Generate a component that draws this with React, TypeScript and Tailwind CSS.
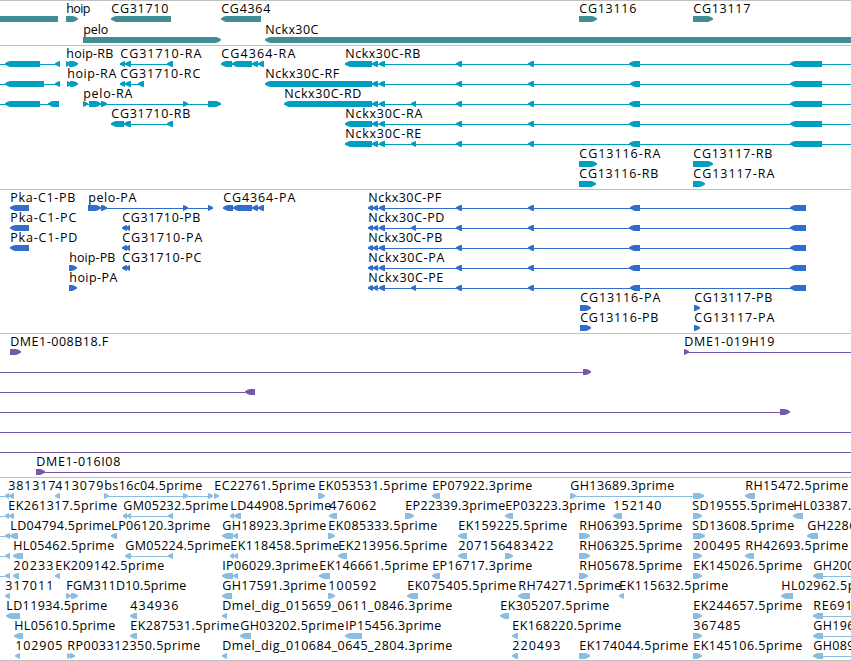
import React from "react";

// [start, end, text]
type Label = [number, number, string];
// [start, end]
type Span = [number, number];

interface Row {
  labels?: Label[];
  lines?: Span[];
  left?: Span[];
  right?: Span[];
  plain?: Span[];
}

interface Track {
  name: string;
  className: string;
  rowClass: string;
  rows: Row[];
}

const NCKX_EXONS: Span[] = [[372, 378], [379, 385], [456, 462], [528, 534]];
const NCKX_CDS: Span[] = [[368, 373], [373, 378], [379, 385], [456, 462], [528, 534], [790, 806]];

const tracks: Track[] = [
  {
    name: "genes",
    className: "h-[45px] text-[#408e93]",
    rowClass: "h-[21px]",
    rows: [
      {
        labels: [[66, 90, "hoip"], [111, 168, "CG31710"], [221, 270, "CG4364"], [579, 636, "CG13116"], [693, 750, "CG13117"]],
        plain: [[0, 58]],
        left: [[111, 171], [221, 261]],
        right: [[66, 78], [579, 597], [693, 713]],
      },
      {
        labels: [[83, 108, "pelo"], [265, 318, "Nckx30C"]],
        left: [[265, 860]],
        right: [[83, 221]],
      },
    ],
  },
  {
    name: "transcripts",
    className: "h-36 text-[#009ec0]",
    rowClass: "h-5",
    rows: [
      {
        labels: [[66, 113, "hoip-RB"], [120, 201, "CG31710-RA"], [221, 295, "CG4364-RA"], [345, 420, "Nckx30C-RB"]],
        lines: [[0, 60], [120, 173], [221, 264], [345, 851]],
        left: [[5, 40], [55, 60], [120, 125], [125, 131], [167, 173], [221, 232], [232, 252], [252, 258], [258, 264], [345, 372], ...NCKX_EXONS, [629, 640], [790, 822]],
        right: [[66, 70], [69, 78]],
      },
      {
        labels: [[67, 116, "hoip-RA"], [120, 200, "CG31710-RC"], [265, 339, "Nckx30C-RF"]],
        lines: [[0, 60], [120, 144], [265, 851]],
        left: [[5, 44], [55, 60], [120, 125], [125, 131], [138, 144], [265, 372], ...NCKX_EXONS, [630, 640], [790, 822]],
        right: [[67, 71], [70, 78]],
      },
      {
        labels: [[83, 132, "pelo-RA"], [284, 361, "Nckx30C-RD"]],
        lines: [[0, 59], [83, 221], [284, 851]],
        left: [[5, 40], [48, 59], [284, 372], ...NCKX_EXONS, [411, 416], [629, 640], [790, 822]],
        right: [[83, 88], [89, 101], [101, 107], [183, 188], [208, 221]],
      },
      {
        labels: [[111, 190, "CG31710-RB"], [345, 422, "Nckx30C-RA"]],
        lines: [[111, 173], [345, 851]],
        left: [[111, 124], [124, 131], [167, 173], [345, 372], ...NCKX_EXONS, [629, 640], [790, 822]],
      },
      {
        labels: [[345, 421, "Nckx30C-RE"]],
        lines: [[345, 851]],
        left: [[345, 372], ...NCKX_EXONS, [411, 416], [629, 640], [790, 822]],
      },
      {
        labels: [[579, 660, "CG13116-RA"], [693, 772, "CG13117-RB"]],
        right: [[579, 597], [693, 713]],
      },
      {
        labels: [[579, 658, "CG13116-RB"], [693, 774, "CG13117-RA"]],
        right: [[579, 596], [693, 705]],
      },
    ],
  },
  {
    name: "proteins",
    className: "h-36 text-[#316dcd]",
    rowClass: "h-5",
    rows: [
      {
        labels: [[10, 75, "Pka-C1-PB"], [88, 136, "pelo-PA"], [223, 295, "CG4364-PA"], [368, 441, "Nckx30C-PF"]],
        lines: [[88, 213], [223, 264], [368, 806]],
        left: [[10, 29], [223, 233], [233, 252], [252, 258], [258, 264], ...NCKX_CDS, [630, 640]],
        right: [[88, 101], [101, 107], [183, 188], [208, 213]],
      },
      {
        labels: [[10, 76, "Pka-C1-PC"], [122, 200, "CG31710-PB"], [368, 444, "Nckx30C-PD"]],
        lines: [[368, 806]],
        left: [[10, 29], [122, 127], [126, 130], ...NCKX_CDS, [411, 416], [629, 640]],
      },
      {
        labels: [[10, 77, "Pka-C1-PD"], [122, 202, "CG31710-PA"], [368, 442, "Nckx30C-PB"]],
        lines: [[368, 806]],
        left: [[10, 29], [122, 127], [126, 130], ...NCKX_CDS, [629, 640]],
      },
      {
        labels: [[69, 115, "hoip-PB"], [122, 201, "CG31710-PC"], [368, 444, "Nckx30C-PA"]],
        lines: [[368, 806]],
        left: [[122, 127], [126, 130], ...NCKX_CDS, [629, 640]],
        right: [[69, 77]],
      },
      {
        labels: [[69, 117, "hoip-PA"], [368, 443, "Nckx30C-PE"]],
        lines: [[368, 806]],
        left: [...NCKX_CDS, [411, 416], [630, 640]],
        right: [[69, 77]],
      },
      {
        labels: [[580, 660, "CG13116-PA"], [694, 772, "CG13117-PB"]],
        right: [[580, 591], [694, 700]],
      },
      {
        labels: [[580, 658, "CG13116-PB"], [694, 774, "CG13117-PA"]],
        right: [[580, 591], [694, 700]],
      },
    ],
  },
  {
    name: "clones",
    className: "h-36 text-[#7658a8]",
    rowClass: "h-5",
    rows: [
      {
        labels: [[10, 108, "DME1-008B18.F"], [684, 774, "DME1-019H19"]],
        lines: [[684, 851]],
        right: [[10, 21], [684, 689]],
      },
      { lines: [[0, 583]], right: [[583, 591]] },
      { lines: [[0, 245]], left: [[245, 255]] },
      { lines: [[0, 780]], right: [[780, 790]] },
      { lines: [[0, 851]] },
      { lines: [[0, 851]] },
      {
        labels: [[36, 120, "DME1-016I08"]],
        lines: [[36, 851]],
        right: [[36, 45]],
      },
    ],
  },
  {
    name: "ests",
    className: "h-[183px] text-[#8abddf]",
    rowClass: "h-5",
    rows: [
      {
        labels: [[8, 55, "381317"], [55, 103, "413079"], [104, 202, "bs16c04.5prime"], [214, 315, "EC22761.5prime"], [318, 427, "EK053531.5prime"], [432, 532, "EP07922.3prime"], [570, 674, "GH13689.3prime"], [745, 848, "RH15472.5prime"]],
        lines: [[0, 14], [104, 213], [570, 704]],
        left: [[5, 9], [9, 14], [55, 60], [432, 440], [745, 755]],
        right: [[104, 109], [183, 188], [208, 213], [214, 219], [318, 325], [570, 576], [693, 704]],
      },
      {
        labels: [[8, 117, "EK261317.5prime"], [123, 228, "GM05232.5prime"], [230, 331, "LD44908.5prime"], [329, 376, "476062"], [405, 505, "EP22339.3prime"], [505, 605, "EP03223.3prime"], [613, 661, "152140"], [692, 794, "SD19555.5prime"], [793, 851, "HL03387."]],
        lines: [[0, 14], [123, 173]],
        left: [[5, 9], [9, 14], [123, 127], [127, 131], [168, 173], [230, 234], [234, 241], [329, 337], [505, 513], [613, 622], [793, 803]],
        right: [[405, 414], [693, 702]],
      },
      {
        labels: [[10, 111, "LD04794.5prime"], [111, 210, "LP06120.3prime"], [222, 326, "GH18923.3prime"], [328, 437, "EK085333.5prime"], [458, 567, "EK159225.5prime"], [579, 682, "RH06393.5prime"], [692, 794, "SD13608.5prime"], [807, 856, "GH2286"]],
        lines: [[0, 10]],
        left: [[5, 10], [10, 18], [111, 117], [222, 233], [233, 238], [458, 467], [807, 818]],
        right: [[328, 335], [579, 590], [693, 705]],
      },
      {
        labels: [[13, 114, "HL05462.5prime"], [125, 230, "GM05224.5prime"], [230, 339, "EK118458.5prime"], [338, 447, "EK213956.5prime"], [458, 505, "207156"], [505, 553, "483422"], [579, 682, "RH06325.5prime"], [693, 740, "200495"], [745, 848, "RH42693.5prime"]],
        lines: [[0, 5], [125, 173]],
        left: [[5, 10], [13, 23], [125, 131], [168, 173], [230, 234], [234, 238], [338, 347], [458, 467], [745, 754]],
        right: [[505, 513], [579, 590], [693, 702]],
      },
      {
        labels: [[13, 53, "20233"], [55, 164, "EK209142.5prime"], [222, 318, "IP06029.3prime"], [319, 428, "EK146661.5prime"], [432, 532, "EP16717.3prime"], [579, 682, "RH05678.5prime"], [693, 802, "EK145026.5prime"], [813, 854, "GH200"]],
        lines: [[0, 5], [813, 851]],
        left: [[5, 10], [13, 19], [55, 60], [222, 233], [233, 238], [319, 330], [432, 440], [813, 823]],
        right: [[579, 588], [693, 702]],
      },
      {
        labels: [[5, 53, "317011"], [66, 186, "FGM311D10.5prime"], [222, 326, "GH17591.3prime"], [328, 376, "100592"], [407, 516, "EK075405.5prime"], [518, 621, "RH74271.5prime"], [619, 728, "EK115632.5prime"], [781, 855, "HL02962.5p"]],
        left: [[5, 10], [222, 232], [407, 418], [518, 530], [619, 624], [781, 793]],
        right: [[66, 71], [71, 78], [328, 335]],
      },
      {
        labels: [[6, 107, "LD11934.5prime"], [130, 178, "434936"], [222, 452, "Dmel_dig_015659_0611_0846.3prime"], [500, 609, "EK305207.5prime"], [693, 802, "EK244657.5prime"], [813, 852, "RE691"]],
        lines: [[813, 851]],
        left: [[6, 20], [130, 137], [222, 227], [500, 509], [813, 823]],
        right: [[693, 702]],
      },
      {
        labels: [[14, 115, "HL05610.5prime"], [130, 239, "EK287531.5prime"], [240, 344, "GH03202.5prime"], [345, 441, "IP15456.3prime"], [512, 621, "EK168220.5prime"], [693, 740, "367485"], [813, 854, "GH196"]],
        lines: [[813, 851]],
        left: [[14, 23], [130, 137], [240, 251], [345, 362], [512, 518], [813, 823]],
        right: [[693, 702]],
      },
      {
        labels: [[15, 62, "102905"], [67, 200, "RP003312350.5prime"], [222, 452, "Dmel_dig_010684_0645_2804.3prime"], [512, 560, "220493"], [579, 688, "EK174044.5prime"], [693, 802, "EK145106.5prime"], [813, 854, "GH089"]],
        lines: [[813, 851]],
        left: [[15, 20], [222, 227], [512, 518], [813, 823]],
        right: [[67, 71], [70, 75], [579, 590], [693, 702]],
      },
    ],
  },
];

// Block of 6px with a rounded taper on one side
function headPoints([a, b]: Span, dir: "left" | "right") {
  const head = Math.min(5, b - a);
  const tip = dir === "left" ? a : b;
  const tail = dir === "left" ? b : a;
  const step = dir === "left" ? 1 : -1;
  const mid = tip + step * head * 0.5;
  const shoulder = tip + step * head;
  return `${tip},17.3 ${mid},15.8 ${shoulder},15 ${tail},15 ${tail},21 ${shoulder},21 ${mid},20 ${tip},18.5`;
}

function TrackRow({ row, className }: { row: Row; className: string }) {
  return (
    <svg width="851" className={`block shrink-0 overflow-visible ${className}`} fill="currentColor">
      {row.lines?.map(([a, b], i) => (
        <rect key={i} x={a} y={18} width={b - a} height={1} />
      ))}
      {row.plain?.map(([a, b], i) => (
        <rect key={i} x={a} y={15} width={b - a} height={6} />
      ))}
      {row.left?.map((span, i) => (
        <polygon key={i} points={headPoints(span, "left")} />
      ))}
      {row.right?.map((span, i) => (
        <polygon key={i} points={headPoints(span, "right")} />
      ))}
      {row.labels?.map(([a, b, text]) => (
        <text key={text} x={a + 0.3} y={12} textLength={b - a} className="fill-black">
          {text}
        </text>
      ))}
    </svg>
  );
}

export default function App() {
  return (
    <main className="flex h-[661px] w-[851px] flex-col overflow-hidden bg-white font-['Open_Sans',sans-serif] text-[12.5px]">
      {tracks.map((track) => (
        <section
          key={track.name}
          aria-label={track.name}
          className={`flex shrink-0 flex-col border-t border-[#c0c0c0] ${track.className}`}
        >
          {track.rows.map((row, i) => (
            <TrackRow key={i} row={row} className={track.rowClass} />
          ))}
        </section>
      ))}
      <div className="h-px shrink-0 bg-[#c0c0c0]" />
    </main>
  );
}
